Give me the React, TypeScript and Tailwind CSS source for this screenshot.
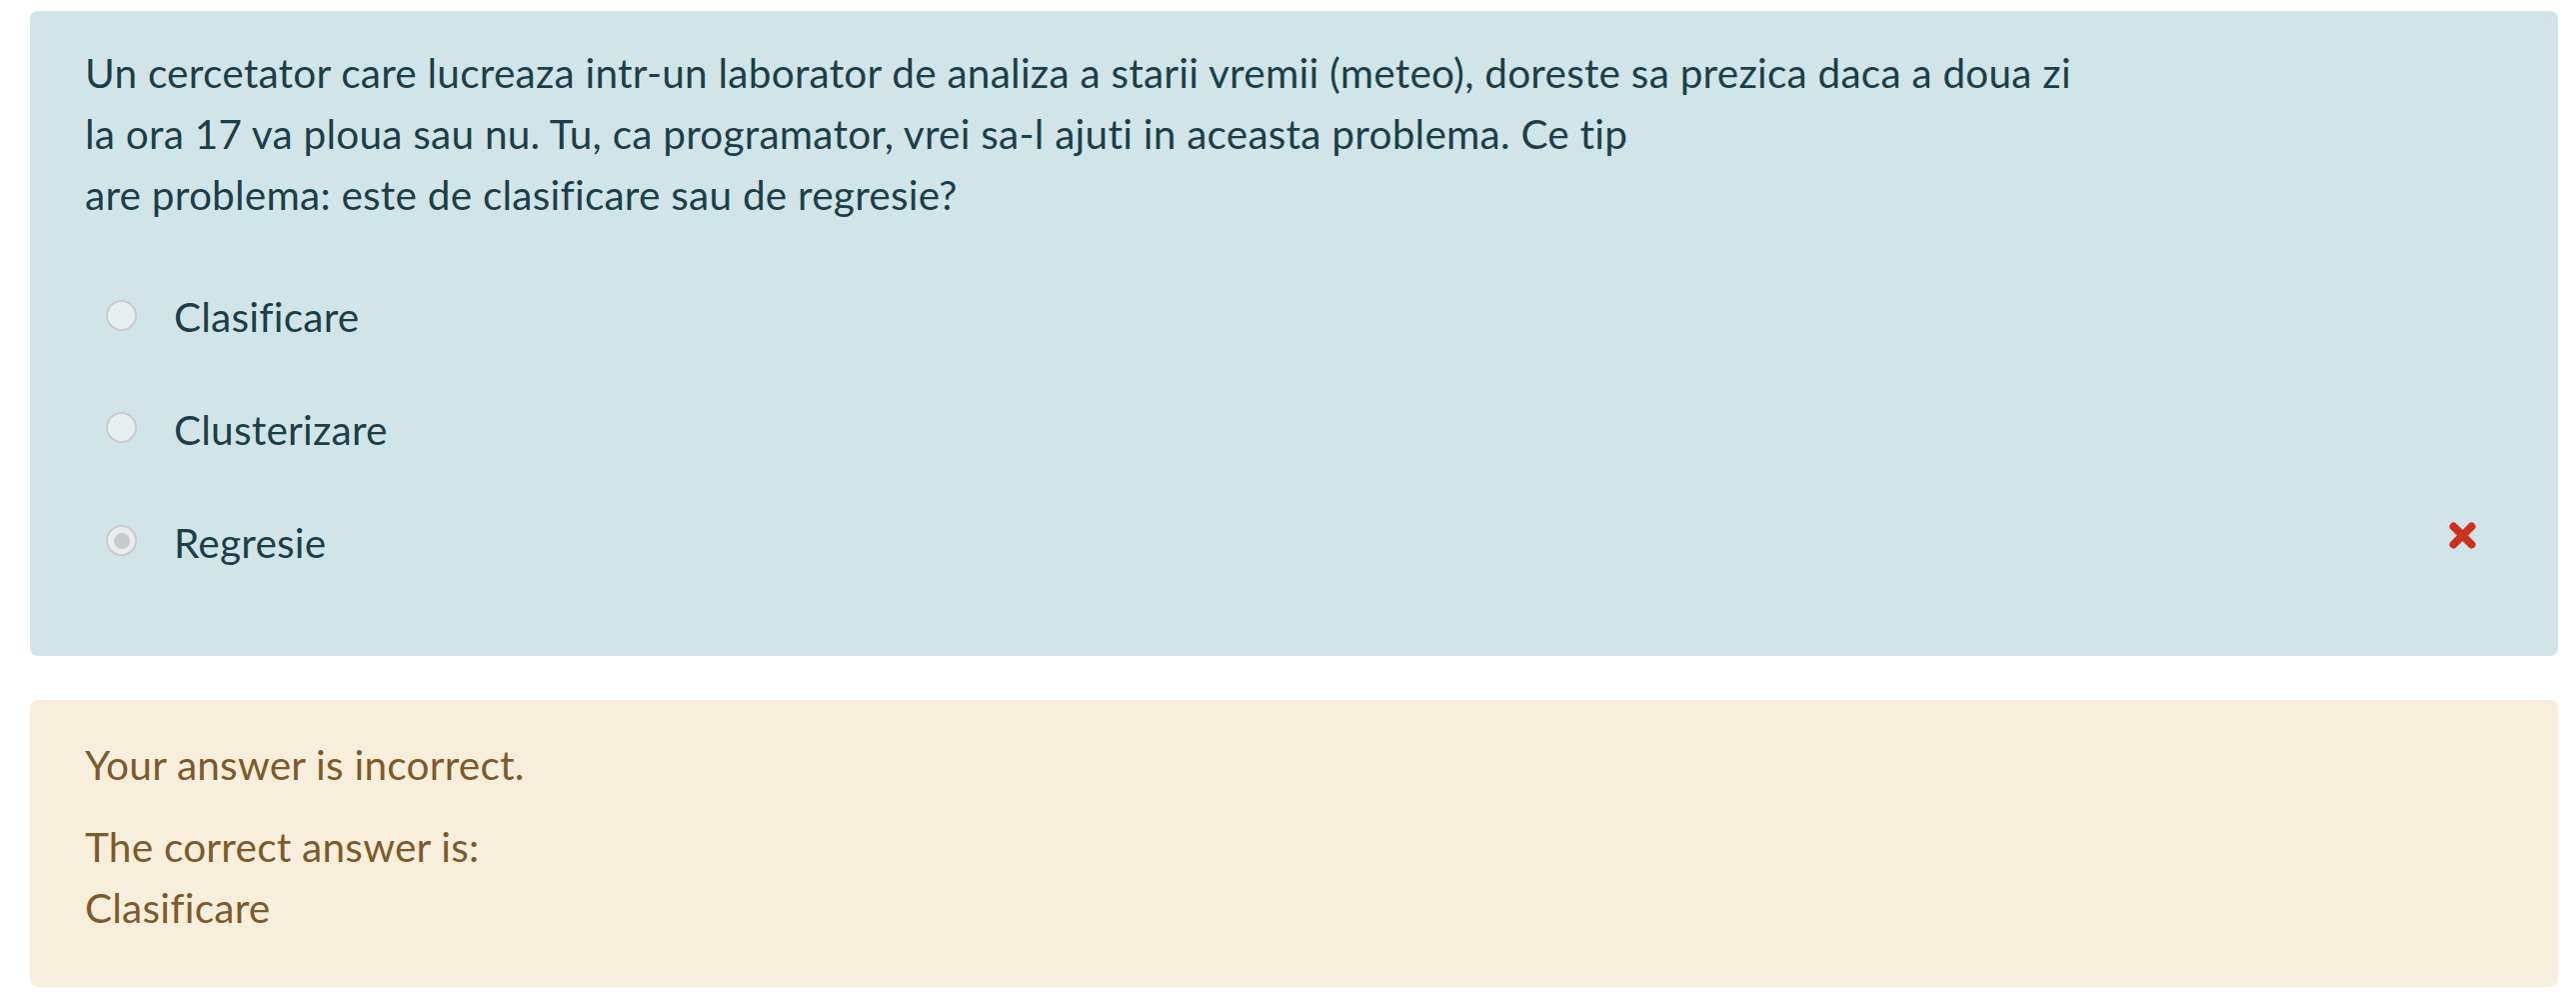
import React from "react";

const options = [
  { label: "Clasificare", checked: false },
  { label: "Clusterizare", checked: false },
  { label: "Regresie", checked: true },
];

function Radio({ checked }: { checked: boolean }) {
  return (
    <span className="flex h-[31px] w-[31px] shrink-0 items-center justify-center rounded-full border-2 border-[#c9cbcc] bg-[#e8eef0]">
      {checked && <span className="h-[16px] w-[16px] rounded-full bg-[#c8cbcc]" />}
    </span>
  );
}

function WrongIcon() {
  return (
    <svg width="29" height="29" viewBox="0 0 29 29" className="mb-[16px] shrink-0">
      <path
        d="M5.5 5.5 L23.5 23.5 M23.5 5.5 L5.5 23.5"
        stroke="#ca3120"
        strokeWidth="8"
        strokeLinecap="round"
        fill="none"
      />
    </svg>
  );
}

export default function App() {
  return (
    <div
      className="h-[1002px] w-full bg-white pl-[30px] pr-[18px] pt-[11px] text-[40.5px] leading-[1.5] tracking-[0.25px] [font-variant-ligatures:none]"
      style={{ fontFamily: "Lato, 'Open Sans', sans-serif" }}
    >
      <div className="rounded-[8px] bg-[#d1e5e9] pb-[82px] pl-[55px] pr-[81px] pt-[32px] text-[#1b3f49]">
        <p>
          Un cercetator care lucreaza intr-un laborator de analiza a starii vremii (meteo), doreste sa prezica daca a doua zi
          <br />
          la ora 17 va ploua sau nu. Tu, ca programator, vrei sa-l ajuti in aceasta problema. Ce tip
          <br />
          are problema: este de clasificare sau de regresie?
        </p>

        <div className="mt-[62px] flex flex-col gap-[52px]">
          {options.map((opt, i) => (
            <div key={i} className="flex items-center">
              <div className="flex items-center pl-[21px]">
                <span className="-mt-[5px]">
                  <Radio checked={opt.checked} />
                </span>
                <span className="ml-[37px]">{opt.label}</span>
              </div>
              {opt.checked && (
                <div className="ml-auto flex items-center">
                  <WrongIcon />
                </div>
              )}
            </div>
          ))}
        </div>
      </div>

      <div className="mt-[44px] rounded-[8px] bg-[#f8eedc] pb-[48px] pl-[55px] pt-[35px] text-[#7d5a29]">
        <p>Your answer is incorrect.</p>
        <div className="mt-[22px]">
          <p>The correct answer is:</p>
          <p>Clasificare</p>
        </div>
      </div>
    </div>
  );
}
